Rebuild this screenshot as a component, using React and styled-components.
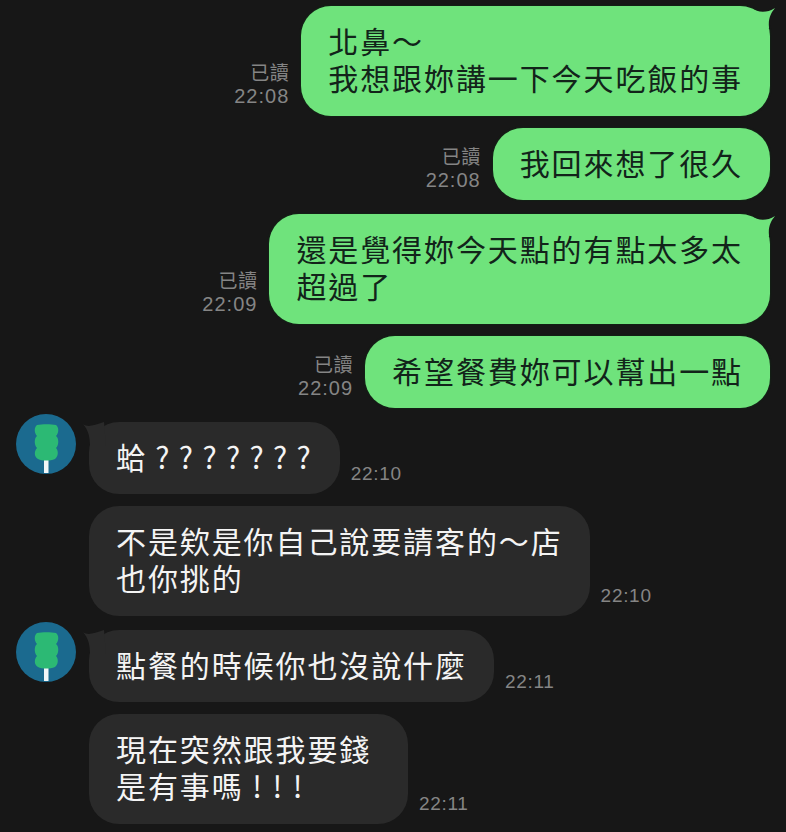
import React from 'react';
import styled, { createGlobalStyle } from 'styled-components';

const GlobalStyle = createGlobalStyle`
  html, body {
    margin: 0;
    padding: 0;
    background: #171717;
  }
  body {
    font-family: "Noto Sans CJK TC", "Liberation Sans", sans-serif;
  }
`;

const Screen = styled.div`
  width: 786px;
  height: 832px;
  overflow: hidden;
  background: #171717;
  display: flex;
  flex-direction: column;
  padding-top: 6px;
  box-sizing: border-box;
`;

const OutRow = styled.div`
  display: flex;
  justify-content: flex-end;
  align-items: flex-end;
  gap: 12px;
  padding-right: 16px;
  margin-top: ${(p) => p.$gap || 0}px;
`;

const InRow = styled.div`
  display: flex;
  align-items: flex-start;
  gap: 13px;
  padding-left: 16px;
  margin-top: ${(p) => p.$gap || 0}px;
`;

const Avatar = styled.svg`
  width: 60px;
  height: 60px;
  flex: none;
`;

const AvatarSlot = styled.div`
  width: 60px;
  flex: none;
`;

const InBody = styled.div`
  display: flex;
  align-items: flex-end;
  gap: 11px;
  margin-top: ${(p) => p.$top || 0}px;
`;

const Bubble = styled.div`
  position: relative;
  box-sizing: border-box;
  min-width: ${(p) => p.$minWidth || 0}px;
  padding: 16px 27px ${(p) => (p.$tall ? 20 : 19)}px 27px;
  border-radius: 30px;
  font-size: 30px;
  line-height: 37px;
  letter-spacing: 1.9px;
  word-spacing: ${(p) => p.$wordSpacing || 0}px;
  white-space: pre-line;
  background: ${(p) => (p.$out ? '#6fe37c' : '#2a2a2a')};
  color: ${(p) => (p.$out ? '#12241a' : '#f4f4f4')};
  ${(p) => (p.$out ? 'box-shadow: 0 0 2px #0e3a16;' : '')}
`;

const Tail = styled.svg`
  position: absolute;
  top: 0;
  width: 24px;
  height: 24px;
  ${(p) => (p.$out ? 'right: -6px;' : 'left: -7px;')}
`;

const Meta = styled.div`
  display: flex;
  flex-direction: column;
  align-items: flex-end;
  padding-bottom: 8px;
  color: #858585;
  font-family: "Liberation Sans", sans-serif;
  font-size: 20px;
  line-height: 24px;
  letter-spacing: 1px;
`;

const ReadMark = styled.span`
  font-family: "Noto Sans CJK TC", sans-serif;
  font-size: 19px;
  letter-spacing: 0.5px;
`;

const Time = styled.div`
  color: #858585;
  font-family: "Liberation Sans", sans-serif;
  font-size: 19px;
  line-height: 24px;
  letter-spacing: 0.7px;
  padding-bottom: 8px;
`;

const Dango = () => (
  <Avatar viewBox="0 0 60 60">
    <circle cx="30" cy="30" r="30" fill="#1b6a8f" />
    <rect x="28" y="45" width="4.5" height="14" fill="#f2f6f8" />
    <path
      d="M21 11c5-1 14-1 19 0 3 2 3 8 0 11 3 2 3 9 0 12 3 3 2 9-1 11-5 2-13 2-17 0-4-2-4-8-1-11-3-3-3-10 0-12-3-3-3-9 0-11z"
      fill="#2cb974"
    />
  </Avatar>
);

const OutTail = () => (
  <Tail $out viewBox="0 0 24 24">
    <path d="M0 2.5C5 6 14 8 23 2 19 7 16 12 17 22L0 22z" fill="#6fe37c" />
  </Tail>
);

const InTail = () => (
  <Tail viewBox="0 0 24 24">
    <path d="M1 2C6 6 12 3 22 0L24 24H8C8 14 6 8 1 2z" fill="#2a2a2a" />
  </Tail>
);

const Sent = ({ time, gap, tail, tall, children }) => (
  <OutRow $gap={gap}>
    <Meta>
      <ReadMark>已讀</ReadMark>
      {time}
    </Meta>
    <Bubble $out $tall={tall}>
      {tail && <OutTail />}
      {children}
    </Bubble>
  </OutRow>
);

const Received = ({ time, gap, first, tall, minWidth, wordSpacing, children }) => (
  <InRow $gap={gap}>
    {first ? <Dango /> : <AvatarSlot />}
    <InBody $top={first ? 8 : 0}>
      <Bubble $minWidth={minWidth} $tall={tall} $wordSpacing={wordSpacing}>
        {first && <InTail />}
        {children}
      </Bubble>
      <Time>{time}</Time>
    </InBody>
  </InRow>
);

export default function App() {
  return (
    <>
      <GlobalStyle />
      <Screen>
        <Sent time="22:08" tail tall>{'北鼻～\n我想跟妳講一下今天吃飯的事'}</Sent>
        <Sent time="22:08" gap={12}>我回來想了很久</Sent>
        <Sent time="22:09" gap={14} tail tall>{'還是覺得妳今天點的有點太多太\n超過了'}</Sent>
        <Sent time="22:09" gap={12}>希望餐費妳可以幫出一點</Sent>
        <Received time="22:10" gap={6} first wordSpacing={-1.2}>蛤 ? ? ? ? ? ? ?</Received>
        <Received time="22:10" gap={12} tall>{'不是欸是你自己說要請客的～店\n也你挑的'}</Received>
        <Received time="22:11" gap={6} first>點餐的時候你也沒說什麼</Received>
        <Received time="22:11" gap={12} tall minWidth={319}>{'現在突然跟我要錢\n是有事嗎 ! ! !'}</Received>
      </Screen>
    </>
  );
}
